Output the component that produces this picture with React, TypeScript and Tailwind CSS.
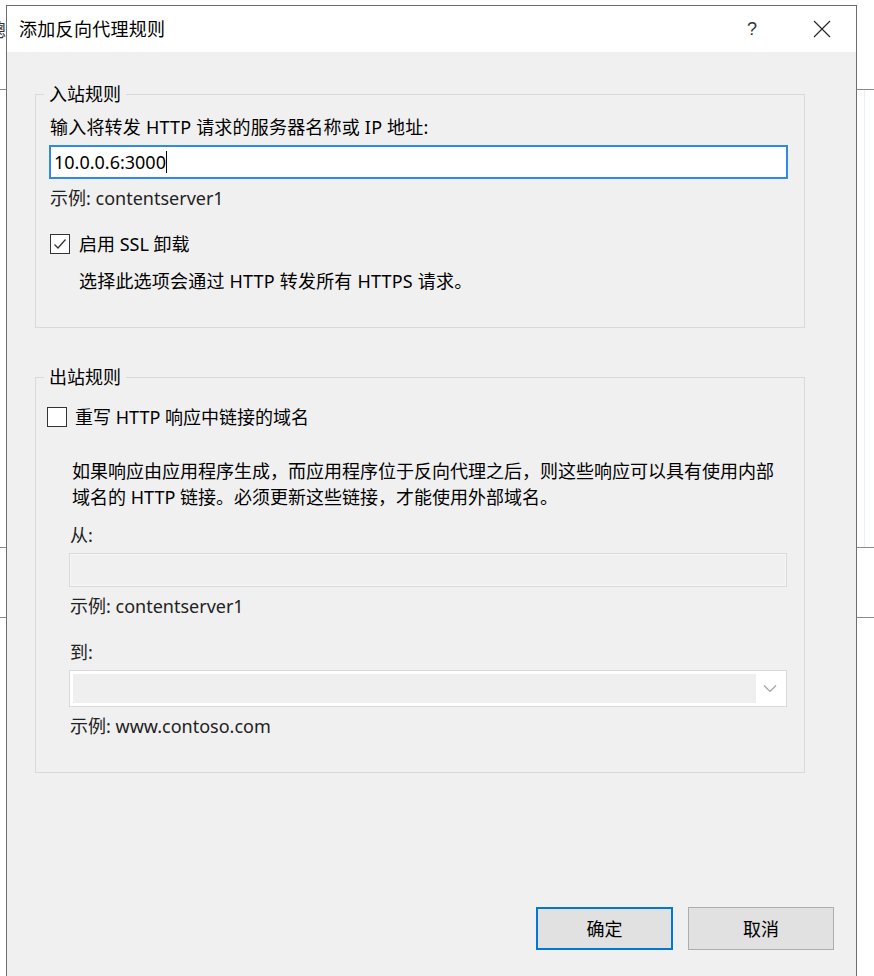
import React from "react";

function Checkbox({ checked }: { checked: boolean }) {
  return (
    <div className="w-[20px] h-[20px] border border-[#333333] bg-white flex items-center justify-center shrink-0">
      {checked && (
        <svg width="16" height="16" viewBox="0 0 16 16">
          <path d="M2.5 8.5 L6 12 L13.5 3.5" fill="none" stroke="#333333" strokeWidth="1.3" />
        </svg>
      )}
    </div>
  );
}

export default function App() {
  return (
    <div className="relative w-[874px] h-[976px] bg-white overflow-hidden font-['Noto_Sans','Noto_Sans_CJK_SC',sans-serif] text-[18px] text-black">
      {/* background window behind dialog */}
      <div className="absolute left-0 right-0 top-[89px] h-px bg-[#8a8a8a]" />
      <div className="absolute left-0 right-0 top-[547px] h-px bg-[#8a8a8a]" />
      <div className="absolute left-0 right-0 top-[617px] h-px bg-[#8a8a8a]" />
      <div className="absolute left-[864px] top-[90px] h-[457px] w-px bg-[#e5f1fb]" />
      <div className="absolute left-[-12px] top-[16px] text-[18px] leading-[26px] font-['Noto_Sans_CJK_SC',sans-serif] text-[#333]">總</div>

      {/* dialog */}
      <div className="absolute left-[6px] top-[5px] w-[851px] h-[980px] border-l border-r border-t border-[#6f6f6f] bg-[#f0f0f0] flex flex-col">
        {/* title bar */}
        <div className="h-[46px] bg-white flex items-center shrink-0">
          <div className="pl-[12px] leading-[26px] tracking-[0.3px]">添加反向代理规则</div>
          <div className="ml-auto w-[30px] text-center text-[18px] leading-[26px] text-[#333] font-['Liberation_Sans',sans-serif] mr-[46px]">?</div>
          <div className="w-[18px] h-[18px] mr-[25px] flex items-center justify-center">
            <svg width="18" height="18" viewBox="0 0 18 18">
              <path d="M1 1 L17 17 M17 1 L1 17" stroke="#222" strokeWidth="1.1" fill="none" />
            </svg>
          </div>
        </div>

        {/* body */}
        <div className="flex flex-col pl-[28px] pr-[51px]">
          {/* group 1 */}
          <div className="relative mt-[42px] border border-[#d9d9d9] pl-[14px] pr-[16px] pt-[19px] pb-[33px]">
            <div className="absolute left-[8px] top-[-14px] px-[5px] bg-[#f0f0f0] leading-[26px]">入站规则</div>
            <div className="leading-[26px] tracking-[0.2px] whitespace-nowrap">输入将转发 HTTP 请求的服务器名称或 IP 地址:</div>
            <div className="mt-[5px] -ml-px h-[34px] border-2 border-[#2d8ae6] bg-white flex items-center pl-[3px]">
              <span className="leading-[26px]">10.0.0.6:3000</span>
              <span className="w-px h-[22px] bg-black" />
            </div>
            <div className="mt-[6px] leading-[26px] text-[#222]">示例: contentserver1</div>
            <div className="mt-[20px] flex items-center h-[26px]">
              <Checkbox checked />
              <span className="ml-[9px] leading-[26px]">启用 SSL 卸载</span>
            </div>
            <div className="mt-[11px] pl-[29px] leading-[26px] tracking-[0.2px] whitespace-nowrap">选择此选项会通过 HTTP 转发所有 HTTPS 请求。</div>
          </div>

          {/* group 2 */}
          <div className="relative mt-[49px] border border-[#d9d9d9] pl-[11px] pr-[17px] pt-[26px] pb-[33px]">
            <div className="absolute left-[8px] top-[-14px] px-[5px] bg-[#f0f0f0] leading-[26px]">出站规则</div>
            <div className="flex items-center h-[26px]">
              <Checkbox checked={false} />
              <span className="ml-[8px] leading-[26px]">重写 HTTP 响应中链接的域名</span>
            </div>
            <div className="mt-[28px] pl-[25px] leading-[26px] whitespace-nowrap">
              <div>如果响应由应用程序生成，而应用程序位于反向代理之后，则这些响应可以具有使用内部</div>
              <div>域名的 HTTP 链接。必须更新这些链接，才能使用外部域名。</div>
            </div>
            <div className="mt-[12px] pl-[23px] leading-[26px] text-[#222]">从:</div>
            <div className="mt-[5px] ml-[22px] h-[34px] border border-[#d9d9d9] bg-[#f7f7f7] p-px">
              <div className="h-full w-full bg-[#f0f0f0]" />
            </div>
            <div className="mt-[6px] pl-[23px] leading-[26px] text-[#222]">示例: contentserver1</div>
            <div className="mt-[20px] pl-[23px] leading-[26px] text-[#222]">到:</div>
            <div className="mt-[5px] ml-[22px] h-[37px] border border-[#d9d9d9] bg-white flex p-[3px]">
              <div className="flex-1 bg-[#efefef]" />
              <div className="w-[27px] flex items-center justify-center">
                <svg width="14" height="9" viewBox="0 0 14 9">
                  <path d="M1 1.5 L7 7.5 L13 1.5" fill="none" stroke="#a0a0a0" strokeWidth="1.2" />
                </svg>
              </div>
            </div>
            <div className="mt-[6px] pl-[23px] leading-[26px] text-[#222]">示例: www.contoso.com</div>
          </div>
        </div>

        {/* buttons */}
        <div className="mt-auto mb-[35px] flex justify-end pr-[22px] gap-[15px]">
          <button className="w-[137px] h-[43px] border-2 border-[#0078d7] bg-[#e1e1e1] leading-[26px]">确定</button>
          <button className="w-[146px] h-[43px] border border-[#adadad] bg-[#e1e1e1] leading-[26px]">取消</button>
        </div>
      </div>
    </div>
  );
}
